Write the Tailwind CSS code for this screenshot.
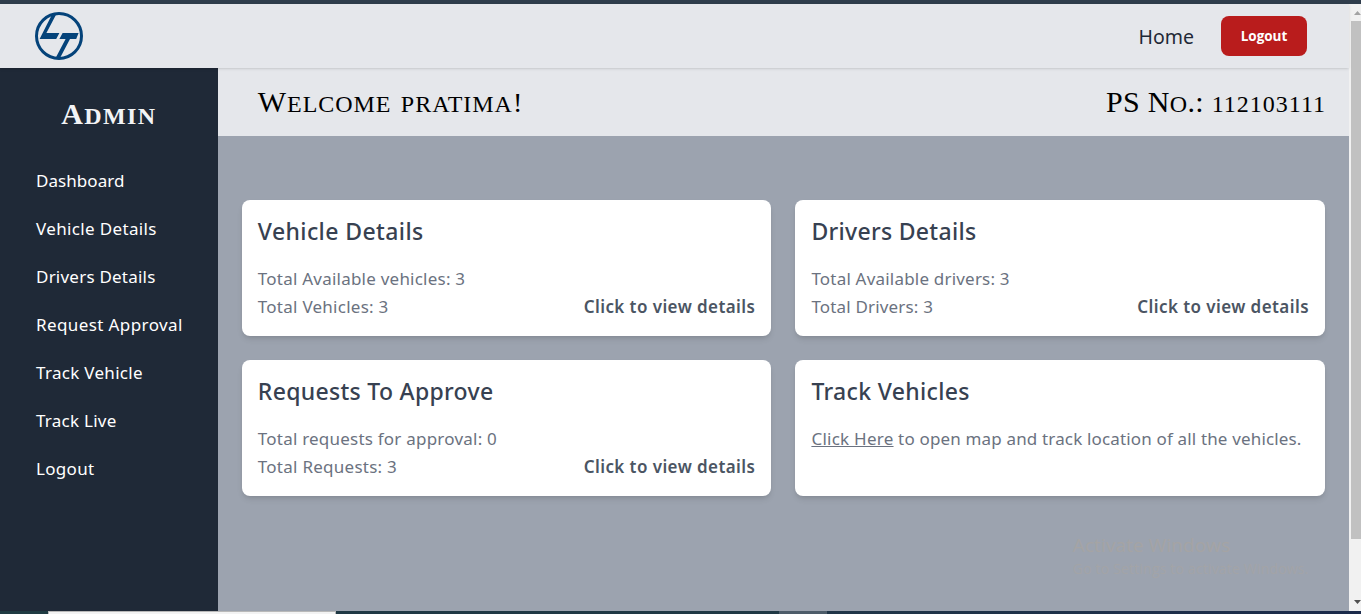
<!DOCTYPE html>
<html lang="en">
<head>
<meta charset="utf-8">
<title>Admin Dashboard</title>
<script src="https://cdn.jsdelivr.net/npm/@tailwindcss/browser@4"></script>
</head>
<body class="h-[614px] w-[1361px] overflow-hidden flex flex-col font-['Noto_Sans',sans-serif] bg-[#9ca3af]">
  <div class="h-1 shrink-0 bg-[#2f3d4c]"></div>
  <div class="flex h-[607px] shrink-0">
    <div class="flex flex-col w-[1349px]">
      <header class="relative z-10 h-16 shrink-0 flex items-center justify-between bg-[#e5e7eb] pl-[35px] pr-[42px] shadow-sm">
        <svg class="size-12" viewBox="0 0 48 48" fill="none">
          <circle cx="24" cy="24" r="22.5" stroke="#04437a" stroke-width="3"/>
          <path fill="#04437a" d="M17 2.6 L21.4 2 L11.4 20.9 H24.4 L21.2 27 H4.6 Z"/>
          <path fill="#04437a" d="M27.6 20.9 H43.6 L41.2 27 H35 L25 46 L20.6 46 L30.6 27 H24.4 Z"/>
        </svg>
        <nav class="flex items-center gap-[27px]">
          <a class="text-[19.5px] leading-7 pt-0.5 text-[#1f2937] whitespace-nowrap">Home</a>
          <button class="h-10 w-[86px] rounded-lg bg-[#b91c1c] text-white text-[13.5px] font-bold font-['Open_Sans'] pt-px">Logout</button>
        </nav>
      </header>
      <div class="flex grow">
        <aside class="w-[217.8px] shrink-0 bg-[#1f2937] text-white pt-[27px]">
          <h1 class="text-center text-[34px] leading-9 font-bold text-[#f3f4f6] font-['Liberation_Serif'] [font-variant:small-caps] tracking-[1.4px]"><span class="text-[30px]">A</span>dmin</h1>
          <ul class="mt-[26px] pl-9 text-[17px] whitespace-nowrap [&>li]:h-12 [&>li]:leading-[46px]">
            <li class="tracking-[.06px]">Dashboard</li>
            <li class="tracking-[.35px]">Vehicle Details</li>
            <li class="tracking-[.22px]">Drivers Details</li>
            <li class="tracking-[.4px]">Request Approval</li>
            <li class="tracking-[.3px]">Track Vehicle</li>
            <li class="tracking-[.25px]">Track Live</li>
            <li class="tracking-[.3px]">Logout</li>
          </ul>
        </aside>
        <main class="grow flex flex-col">
          <div class="h-[68px] shrink-0 bg-[#e5e7eb] flex items-center justify-between pl-10 pr-[23px] pb-1 text-[34px] text-black font-['Liberation_Serif'] [font-variant:small-caps] whitespace-nowrap">
            <span class="tracking-[.95px]"><span class="text-[30px]">W</span>elcome pratima<span class="text-[28px]">!</span></span>
            <span class="tracking-[.3px]"><span class="text-[30px]">PS N</span>o<span class="text-[30px]">.: </span><span class="text-[24px] tracking-[1px]">112103111</span></span>
          </div>
          <div class="mt-16 px-6 grid grid-cols-2 gap-6 text-[17px] leading-7 text-[#6b7280] whitespace-nowrap">
            <section class="h-[136px] rounded-lg bg-white px-4 pt-[15px] shadow-md">
              <h2 class="text-[23px] leading-8 font-medium text-[#374151] mb-[17.5px] tracking-[.4px]">Vehicle Details</h2>
              <p class="tracking-[.23px]">Total Available vehicles: 3</p>
              <div class="flex justify-between"><span class="tracking-[.26px]">Total Vehicles: 3</span><span class="font-semibold text-[#4b5563] tracking-[.42px]">Click to view details</span></div>
            </section>
            <section class="h-[136px] rounded-lg bg-white px-4 pt-[15px] shadow-md">
              <h2 class="text-[23px] leading-8 font-medium text-[#374151] mb-[17.5px] tracking-[.3px]">Drivers Details</h2>
              <p class="tracking-[.2px]">Total Available drivers: 3</p>
              <div class="flex justify-between"><span class="tracking-[.17px]">Total Drivers: 3</span><span class="font-semibold text-[#4b5563] tracking-[.42px]">Click to view details</span></div>
            </section>
            <section class="h-[136px] rounded-lg bg-white px-4 pt-[15px] shadow-md">
              <h2 class="text-[23px] leading-8 font-medium text-[#374151] mb-[17.5px] tracking-[.3px]">Requests To Approve</h2>
              <p class="tracking-[.22px]">Total requests for approval: 0</p>
              <div class="flex justify-between"><span class="tracking-[.26px]">Total Requests: 3</span><span class="font-semibold text-[#4b5563] tracking-[.42px]">Click to view details</span></div>
            </section>
            <section class="h-[136px] rounded-lg bg-white px-4 pt-[15px] shadow-md">
              <h2 class="text-[23px] leading-8 font-medium text-[#374151] mb-[17.5px] tracking-[.33px]">Track Vehicles</h2>
              <p class="tracking-[.16px]"><a class="underline tracking-[.25px]">Click Here</a> to open map and track location of all the vehicles.</p>
            </section>
          </div>
          <div class="mt-[33px] pl-[855px] whitespace-nowrap text-[#a5a4a4] font-['Open_Sans']">
            <p class="text-[19px] leading-[32px] tracking-[.1px]">Activate Windows</p>
            <p class="text-[14px] leading-4 tracking-[.18px] text-[#a3a4a7]">Go to Settings to activate Windows.</p>
          </div>
        </main>
      </div>
    </div>
    <div class="w-3 bg-[#f1f1f1] flex flex-col">
      <svg class="h-[17px] w-3 shrink-0" viewBox="0 0 12 17"><path d="M5 11 L8.5 7 L12 11Z" fill="#a3a3a3"/></svg>
      <div class="ml-0.5 h-[518px] bg-[#c1c1c1]"></div>
      <svg class="mt-auto h-[17px] w-3 shrink-0" viewBox="0 0 12 17"><path d="M5 6 H12 L8.5 10Z" fill="#505050"/></svg>
    </div>
  </div>
  <div class="h-[3px] shrink-0 flex bg-[#203447]">
    <div class="w-12 bg-[#1f3b42]"></div>
    <div class="w-72 bg-[#f3f3f3] border border-b-0 border-[#b9b9b9]"></div>
    <div class="w-[443px] bg-[#1f3844]"></div>
    <div class="w-12 bg-[#4d5c69]"></div>
    <div class="grow bg-linear-to-r from-[#203547] to-[#1b2a4a]"></div>
  </div>
</body>
</html>
